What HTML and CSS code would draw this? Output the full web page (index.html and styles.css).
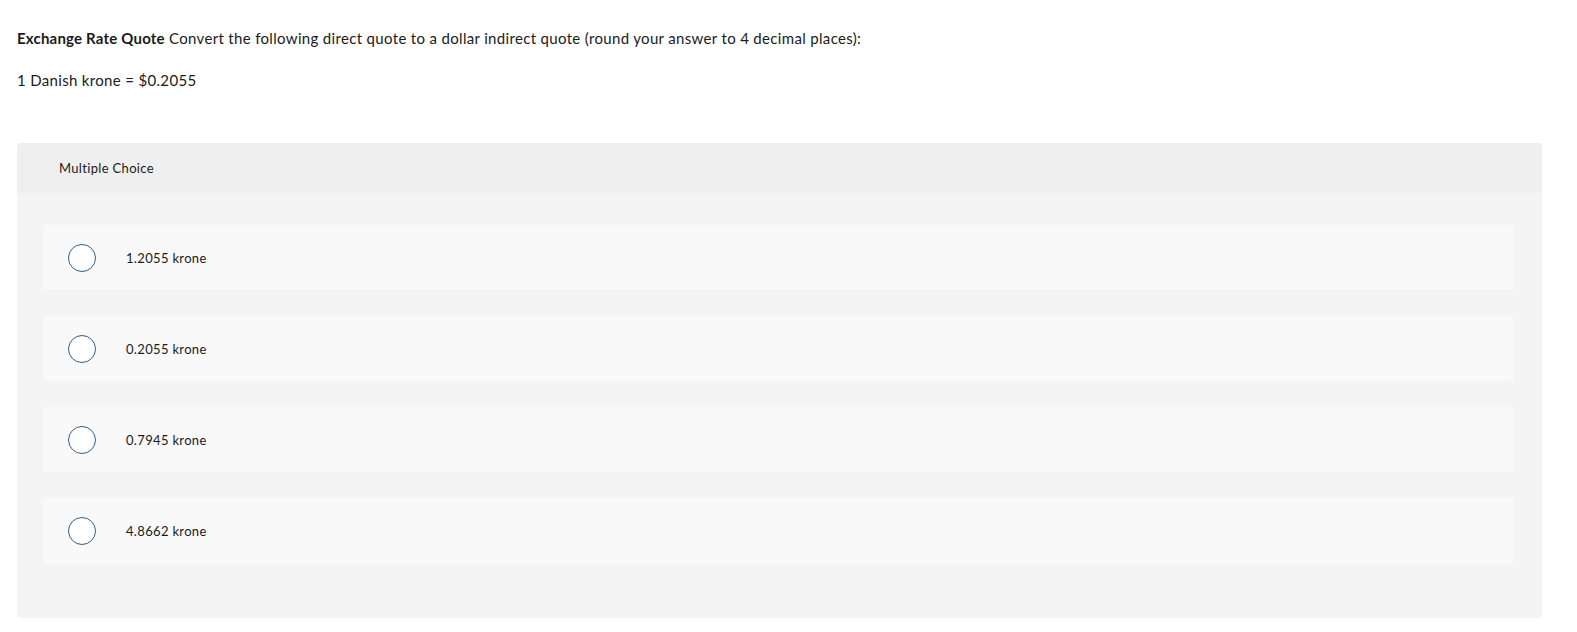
FILE: index.html
```html
<!DOCTYPE html>
<html>
<head>
<meta charset="utf-8">
<link rel="stylesheet" href="styles.css">
</head>
<body>
<div class="page">
  <p class="prompt"><strong>Exchange Rate Quote</strong> Convert the following direct quote to a dollar indirect quote (round your answer to 4 decimal places):</p>
  <p class="given">1 Danish krone = $0.2055</p>
  <div class="panel">
    <div class="panel-head">Multiple Choice</div>
    <div class="panel-body">
      <div class="option"><span class="radio"></span><span class="label">1.2055 krone</span></div>
      <div class="option"><span class="radio"></span><span class="label">0.2055 krone</span></div>
      <div class="option"><span class="radio"></span><span class="label">0.7945 krone</span></div>
      <div class="option"><span class="radio"></span><span class="label">4.8662 krone</span></div>
    </div>
  </div>
</div>
</body>
</html>
```
FILE: styles.css
```css
html, body { margin: 0; padding: 0; background: #fff; }
body { font-family: Lato, "Open Sans", "Liberation Sans", sans-serif; color: #1b1b1b; letter-spacing: 0.33px; }
.page { padding: 0 35px 0 17px; }
.prompt { margin: 0; padding-top: 29px; font-size: 15px; line-height: 18px; }
.prompt strong { font-weight: 700; letter-spacing: 0.2px; }
.given { margin: 24px 0 0; font-size: 15px; line-height: 18px; }
.panel { margin-top: 54px; border-radius: 3px; overflow: hidden; background: #f4f4f4; }
.panel-head { background: #efefef; height: 50px; display: flex; align-items: center; padding-left: 42px; font-size: 13px; }
.panel-body { padding: 32px 28px 55px 26px; display: flex; flex-direction: column; gap: 26px; }
.option { background: #f9f9f9; border-radius: 3px; height: 65px; display: flex; align-items: center; padding-left: 25px; }
.radio { width: 26px; height: 26px; border: 1.3px solid #2f5f8f; border-radius: 50%; background: #fff; flex: none; }
.label { margin-left: 30px; font-size: 13px; }
```
